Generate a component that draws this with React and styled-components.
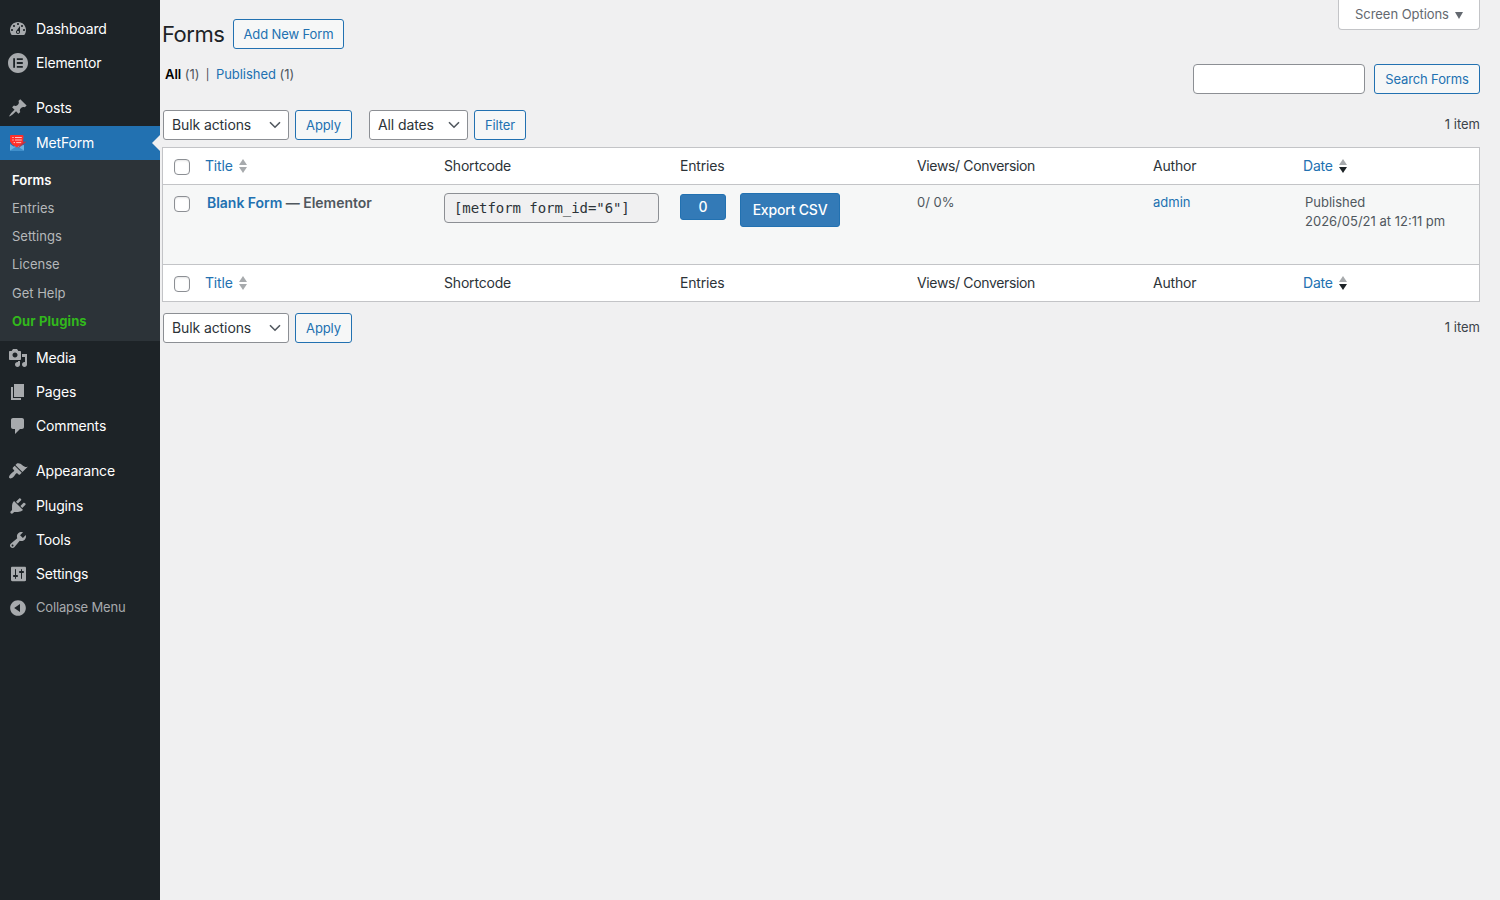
import styled, { createGlobalStyle, css } from 'styled-components';

const GlobalStyle = createGlobalStyle`
    * {
        box-sizing: border-box;
    }

    body {
        margin: 0;
        background: #f0f0f1;
        color: #3c434a;
        font-family: Inter, "Liberation Sans", sans-serif;
        font-size: 13px;
        line-height: 18px;
    }
`;

/* 20x20 menu glyphs */
const icons = {
    dashboard: 'M3.76 16h12.48c1.1-1.37 1.76-3.11 1.76-5 0-4.42-3.58-8-8-8s-8 3.58-8 8c0 1.89.66 3.63 1.76 5zM10 4c.55 0 1 .45 1 1s-.45 1-1 1-1-.45-1-1 .45-1 1-1zM6 6c.55 0 1 .45 1 1s-.45 1-1 1-1-.45-1-1 .45-1 1-1zm8 0c.55 0 1 .45 1 1s-.45 1-1 1-1-.45-1-1 .45-1 1-1zm-5.37 5.55L12 7v6c0 1.1-.9 2-2 2s-2-.9-2-2c0-.57.24-1.08.63-1.45zM4 10c.55 0 1 .45 1 1s-.45 1-1 1-1-.45-1-1 .45-1 1-1zm12 0c.55 0 1 .45 1 1s-.45 1-1 1-1-.45-1-1 .45-1 1-1zm-5 3c0-.55-.45-1-1-1s-1 .45-1 1 .45 1 1 1 1-.45 1-1z',
    elementor: 'M10 0C4.477 0 0 4.477 0 10s4.477 10 10 10 10-4.477 10-10S15.523 0 10 0zM5.2 5.2H7v9.6H5.2zM8.8 5.2h6v1.8h-6zM8.8 9.1h6v1.8h-6zM8.8 13h6v1.8h-6z',
    post: 'M10.44 3.02l1.82-1.82 6.36 6.35-1.83 1.82c-1.05-.68-2.48-.57-3.41.36l-.75.75c-.92.93-1.04 2.35-.35 3.41l-1.83 1.82-2.41-2.41-2.8 2.79c-.42.42-3.38 2.71-3.8 2.29s1.86-3.39 2.28-3.81l2.79-2.79L4.1 9.36l1.83-1.82c1.05.69 2.48.57 3.4-.36l.75-.75c.93-.92 1.05-2.35.36-3.41z',
    media: 'M13 11V4c0-.55-.45-1-1-1h-1.67L9 1H5L3.67 3H2c-.55 0-1 .45-1 1v7c0 .55.45 1 1 1h10c.55 0 1-.45 1-1zM7 4.5c1.38 0 2.5 1.12 2.5 2.5S8.38 9.5 7 9.5 4.5 8.38 4.5 7 5.62 4.5 7 4.5zM14 6h5v10.5c0 1.38-1.12 2.5-2.5 2.5S14 17.88 14 16.5s1.12-2.5 2.5-2.5c.17 0 .34.02.5.05V9h-3V6zm-4 8.05V13h2v3.5c0 1.38-1.12 2.5-2.5 2.5S7 17.88 7 16.5 8.12 14 9.5 14c.17 0 .34.02.5.05z',
    page: 'M6 15V2h10v13H6zm-1 1h8v2H3V5h2v11z',
    comments: 'M5 2h9c1.1 0 2 .9 2 2v7c0 1.1-.9 2-2 2h-2l-5 5v-5H5c-1.1 0-2-.9-2-2V4c0-1.1.9-2 2-2z',
    appearance: 'M14.48 11.06L7.41 3.99l1.5-1.5c.5-.56 2.3-.47 3.51.32 1.21.8 1.43 1.28 2.91 2.1 1.18.64 2.45 1.26 4.45.85zm-.71.71L6.7 4.7 4.93 6.47c-.39.39-.39 1.02 0 1.41l1.06 1.06c.39.39.39 1.03 0 1.42-.6.6-1.43 1.11-2.21 1.69-.35.26-.7.53-1.01.84C1.43 14.23.4 16.08 1.4 17.07c.99 1 2.84-.03 4.18-1.36.31-.31.58-.66.85-1.02.57-.78 1.08-1.61 1.69-2.21.39-.39 1.02-.39 1.41 0l1.06 1.06c.39.39 1.02.39 1.41 0z',
    plugins: 'M13.11 4.36L9.87 7.6 8 5.73l3.24-3.24c.35-.34 1.05-.2 1.56.32.52.51.66 1.21.31 1.55zm-8 1.77l.91-1.12 9.01 9.01-1.19.84c-.71.71-2.63 1.16-3.82 1.16H6.14L4.9 17.26c-.59.59-1.54.59-2.12 0-.59-.58-.59-1.53 0-2.12l1.24-1.24v-3.88c0-1.13.4-3.19 1.09-3.89zm7.26 3.97l3.24-3.24c.34-.35 1.04-.21 1.55.31.52.51.66 1.21.31 1.55l-3.24 3.25z',
    tools: 'M16.68 9.77c-1.34 1.34-3.3 1.67-4.95.99l-5.41 6.52c-.99.99-2.59.99-3.58 0s-.99-2.59 0-3.57l6.52-5.42c-.68-1.65-.35-3.61.99-4.95 1.28-1.28 3.12-1.62 4.72-1.06l-2.89 2.89 2.82 2.82 2.86-2.87c.53 1.58.18 3.39-1.08 4.65zM3.81 16.21c.4.39 1.04.39 1.43 0 .4-.4.4-1.04 0-1.43-.39-.4-1.03-.4-1.43 0-.39.39-.39 1.03 0 1.43z',
    settings: 'M18 16V4c0-.8-.5-1.3-1.3-1.3H4.3C3.5 2.7 3 3.2 3 4v12c0 .8.5 1.2 1.3 1.2h12.4c.8 0 1.3-.4 1.3-1.2zM8 11h1c.55 0 1 .45 1 1s-.45 1-1 1H8v1.5c0 .28-.22.5-.5.5s-.5-.22-.5-.5V13H6c-.55 0-1-.45-1-1s.45-1 1-1h1V5.5c0-.28.22-.5.5-.5s.5.22.5.5V11zm5-2h-1c-.55 0-1-.45-1-1s.45-1 1-1h1V5.5c0-.28.22-.5.5-.5s.5.22.5.5V7h1c.55 0 1 .45 1 1s-.45 1-1 1h-1v5.5c0 .28-.22.5-.5.5s-.5-.22-.5-.5V9z',
    collapse: 'M10 2.16c4.33 0 7.84 3.51 7.84 7.84s-3.51 7.84-7.84 7.84S2.16 14.33 2.16 10 5.71 2.16 10 2.16zm2 11.72V6.12L6.18 9.97z',
};

const submenu = [
    { label: 'Forms', current: true },
    { label: 'Entries' },
    { label: 'Settings' },
    { label: 'License' },
    { label: 'Get Help', gap: 1 },
    { label: 'Our Plugins', promo: true },
];

const MenuIcon = ({ name }) => (
    <Glyph viewBox="0 0 20 20">
        <path fillRule="evenodd" d={icons[name]} />
    </Glyph>
);

const MetFormIcon = () => (
    <Glyph viewBox="0 0 20 20">
        <path fill="#6db3e2" d="M2 11l3.5 2.5L16 12v5a1 1 0 0 1-1 1H3a1 1 0 0 1-1-1z" />
        <path fill="#3f8fcb" d="M2 17.5l7-4.5 7 4.5a1 1 0 0 1-1 .5H3z" />
        <path fill="#b8384a" d="M13.5 8.4l5 .4-8.4 6.6z" />
        <path fill="#ff2f2a" d="M3 2h11.5a1 1 0 0 1 1 1l-.5 6.6L9 14.6 4.2 11.6 2 8.4V3a1 1 0 0 1 1-1z" />
        <path stroke="#ffc4c4" strokeWidth="1" d="M4.3 4.5h1.4M7 4.5h6.8M4.3 7h1.4M7 7h6.8M5.6 9.6H7M8.2 9.6h5" />
    </Glyph>
);

const Item = ({ icon, label, ...rest }) => (
    <MenuItem {...rest}>
        {icon === 'metform' ? <MetFormIcon /> : <MenuIcon name={icon} />}
        <span>{label}</span>
    </MenuItem>
);

const Sidebar = () => (
    <SidebarWrap>
        <Item icon="dashboard" label="Dashboard" />
        <Item icon="elementor" label="Elementor" />
        <Item icon="post" label="Posts" $top={11} />
        <Item icon="metform" label="MetForm" $top={1} $active />
        <Submenu>
            {submenu.map((item) => (
                <SubItem key={item.label} $current={item.current} $promo={item.promo} $gap={item.gap}>
                    {item.label}
                </SubItem>
            ))}
        </Submenu>
        <Item icon="media" label="Media" />
        <Item icon="page" label="Pages" />
        <Item icon="comments" label="Comments" />
        <Item icon="appearance" label="Appearance" $top={11} />
        <Item icon="plugins" label="Plugins" $top={1} />
        <Item icon="tools" label="Tools" />
        <Item icon="settings" label="Settings" />
        <Item icon="collapse" label="Collapse Menu" $muted />
    </SidebarWrap>
);

const Sorter = ({ desc }) => (
    <SortArrows viewBox="0 0 8 14">
        <path fill="#a7aaad" d="M0 6l4-6 4 6z" />
        <path fill={desc ? '#1d2327' : '#a7aaad'} d="M0 8h8l-4 6z" />
    </SortArrows>
);

const SelectBox = ({ label, width }) => (
    <Select $width={width}>
        {label}
        <Chevron viewBox="0 0 12 8">
            <path d="M1 1.2l5 5 5-5" />
        </Chevron>
    </Select>
);

const HeadRow = ({ foot }) => (
    <Row $head $foot={foot}>
        <CheckCell $head><Checkbox /></CheckCell>
        <SortLink>Title<Sorter /></SortLink>
        <Cell>Shortcode</Cell>
        <Cell>Entries</Cell>
        <Cell $tight>Views/ Conversion</Cell>
        <Cell>Author</Cell>
        <SortLink>Date<Sorter desc /></SortLink>
    </Row>
);

const App = () => {
    return (
        <>
            <GlobalStyle />
            <Page>
                <Sidebar />
                <Content>
                    <TopBar>
                        <TitleWrap>
                            <Title>Forms</Title>
                            <Button $width={111}>Add New Form</Button>
                        </TitleWrap>
                        <ScreenOptions>
                            Screen Options
                            <Caret viewBox="0 0 8 7"><path d="M0 0h8L4 7z" /></Caret>
                        </ScreenOptions>
                    </TopBar>
                    <FilterBar>
                        <Views>
                            <b>All</b> <Count>(1)</Count>
                            <Divider>|</Divider>
                            <Link>Published</Link> <Count>(1)</Count>
                        </Views>
                        <SearchWrap>
                            <SearchInput />
                            <Button $width={106}>Search Forms</Button>
                        </SearchWrap>
                    </FilterBar>
                    <TableNav>
                        <SelectBox label="Bulk actions" width={126} />
                        <Button $width={57}>Apply</Button>
                        <DateFilter>
                            <SelectBox label="All dates" width={99} />
                            <Button $width={52}>Filter</Button>
                        </DateFilter>
                        <ItemCount>1 item</ItemCount>
                    </TableNav>
                    <Table>
                        <HeadRow />
                        <Row>
                            <CheckCell><Checkbox /></CheckCell>
                            <FormName><Link>Blank Form</Link> — Elementor</FormName>
                            <Shortcode>[metform form_id="6"]</Shortcode>
                            <Actions>
                                <EntryCount>0</EntryCount>
                                <ExportButton>Export CSV</ExportButton>
                            </Actions>
                            <Cell>0/ 0%</Cell>
                            <Cell><Link>admin</Link></Cell>
                            <DateCell>Published<br />2026/05/21 at 12:11 pm</DateCell>
                        </Row>
                        <HeadRow foot />
                    </Table>
                    <TableNav $bottom>
                        <SelectBox label="Bulk actions" width={126} />
                        <Button $width={57}>Apply</Button>
                        <ItemCount>1 item</ItemCount>
                    </TableNav>
                </Content>
            </Page>
        </>
    );
};

export default App;

const Page = styled.div`
    display: flex;
    height: 100vh;
    overflow: hidden;
`;

const SidebarWrap = styled.nav`
    width: 160px;
    flex-shrink: 0;
    padding-top: 12px;
    background: #1d2327;
`;

const Glyph = styled.svg`
    width: 20px;
    height: 20px;
    flex-shrink: 0;
    fill: #a7aaad;
`;

const MenuItem = styled.div`
    position: relative;
    display: flex;
    align-items: center;
    gap: 8px;
    height: 34px;
    margin-top: ${({ $top }) => $top || 0}px;
    padding-left: 8px;
    color: #fff;
    font-size: 14px;
    letter-spacing: -0.16px;

    ${({ $muted }) => $muted && css`
        color: #a7aaad;
        font-size: 13px;

        span {
            padding-bottom: 2px;
        }
    `}

    ${({ $active }) => $active && css`
        background: #2271b1;

        &::after {
            content: "";
            position: absolute;
            right: 0;
            top: 9px;
            border: 8px solid transparent;
            border-left: 0;
            border-right-color: #f0f0f1;
        }
    `}
`;

const Submenu = styled.div`
    height: 181px;
    padding-top: 6px;
    background: #2c3338;
`;

const SubItem = styled.div`
    height: 28px;
    margin-top: ${({ $gap }) => $gap || 0}px;
    padding: 5px 12px;
    color: ${({ $current, $promo }) => ($promo ? '#32b81c' : $current ? '#fff' : '#b5b8ba')};
    font-weight: ${({ $current, $promo }) => ($promo ? 700 : $current ? 600 : 400)};
    letter-spacing: ${({ $promo }) => ($promo ? '0.1px' : 'normal')};
`;

const Content = styled.main`
    flex: 1;
    padding: 0 20px 0 2px;
`;

const TopBar = styled.header`
    display: flex;
    justify-content: space-between;
    height: 64px;
`;

const TitleWrap = styled.div`
    display: flex;
    gap: 9px;
    padding-top: 19px;
`;

const Title = styled.h1`
    width: 62px;
    margin: 0;
    color: #1d2327;
    font-size: 22px;
    font-weight: 400;
    letter-spacing: -0.5px;
    line-height: 30px;
    white-space: nowrap;
`;

const ScreenOptions = styled.div`
    display: flex;
    justify-content: center;
    gap: 6px;
    width: 142px;
    height: 30px;
    padding-top: 5px;
    border: 1px solid #c3c4c7;
    border-top: 0;
    border-radius: 0 0 4px 4px;
    background: #fff;
    color: #646970;
    letter-spacing: -0.05px;
`;

const Caret = styled.svg`
    width: 8px;
    height: 7px;
    margin-top: 7px;
    fill: #646970;
`;

const Button = styled.button`
    width: ${({ $width }) => $width}px;
    height: 30px;
    padding: 1px 0 0;
    border: 1px solid #2271b1;
    border-radius: 3px;
    background: #f6f7f7;
    color: #2271b1;
    font: 400 13px/27px Inter, "Liberation Sans", sans-serif;
    letter-spacing: -0.12px;
    white-space: nowrap;
`;

const FilterBar = styled.div`
    display: flex;
    justify-content: space-between;
    height: 46px;
`;

const Views = styled.div`
    padding: 1px 0 0 3px;
    letter-spacing: -0.05px;
    white-space: nowrap;

    b {
        color: #000;
        font-weight: 600;
    }
`;

const Count = styled.span`
    color: #50575e;
`;

const Divider = styled.span`
    margin: 0 6.5px;
    font-size: 11px;
`;

const Link = styled.a`
    color: #2271b1;
`;

const SearchWrap = styled.div`
    display: flex;
    gap: 9px;
`;

const SearchInput = styled.input`
    width: 172px;
    height: 30px;
    border: 1px solid #8c8f94;
    border-radius: 4px;
    background: #fff;
`;

const TableNav = styled.div`
    display: flex;
    gap: 6px;
    height: 37px;
    padding-left: 1px;
    margin-top: ${({ $bottom }) => ($bottom ? 11 : 0)}px;
`;

const DateFilter = styled.div`
    display: flex;
    gap: 6px;
    margin-left: 11px;
`;

const Select = styled.div`
    display: flex;
    align-items: center;
    justify-content: space-between;
    width: ${({ $width }) => $width}px;
    height: 30px;
    padding: 0 7px 0 8px;
    border: 1px solid #8c8f94;
    border-radius: 3px;
    background: #fff;
    color: #2c3338;
    font-size: 14px;
    letter-spacing: -0.1px;
    white-space: nowrap;
`;

const Chevron = styled.svg`
    width: 12px;
    height: 8px;
    fill: none;
    stroke: #50575e;
    stroke-width: 1.6;
`;

const ItemCount = styled.div`
    margin-left: auto;
    padding-top: 5px;
`;

const Table = styled.section`
    border: 1px solid #c3c4c7;
    background: #fff;
`;

const Row = styled.div`
    display: grid;
    grid-template-columns: 42px 239px 236px 237px 236px 150px 1fr;
    height: ${({ $head }) => ($head ? 36 : 80)}px;
    background: ${({ $head }) => ($head ? '#fff' : '#f6f7f7')};
    ${({ $foot }) => $foot && 'border-top: 1px solid #c3c4c7; height: 37px;'}

    ${({ $head }) => $head ? css`
        align-items: center;
        color: #2c3338;
        font-size: 14px;
        letter-spacing: -0.18px;
    ` : css`
        align-items: start;
        padding-top: 8px;
        border-top: 1px solid #c3c4c7;
        color: #50575e;
        line-height: 19px;
    `}
`;

const Cell = styled.div`
    ${({ $tight }) => $tight && 'letter-spacing: -0.35px;'}
    white-space: nowrap;
`;

const CheckCell = styled.div`
    display: flex;
    padding: ${({ $head }) => ($head ? 1 : 3)}px 0 0 11px;
`;

const Checkbox = styled.input.attrs({ type: 'checkbox' })`
    appearance: none;
    width: 16px;
    height: 16px;
    margin: 0;
    border: 1px solid #8c8f94;
    border-radius: 4px;
    background: #fff;
    box-shadow: inset 0 1px 2px rgba(0, 0, 0, 0.1);
`;

const SortLink = styled.div`
    display: flex;
    align-items: center;
    gap: 6px;
    color: #2271b1;
`;

const SortArrows = styled.svg`
    width: 8px;
    height: 14px;
`;

const FormName = styled.strong`
    padding-left: 2px;
    font-size: 14px;
    font-weight: 600;
    letter-spacing: -0.03px;
    white-space: nowrap;
`;

const Shortcode = styled.code`
    width: 215px;
    height: 30px;
    padding: 0 9px;
    border: 1px solid #8c8f94;
    border-radius: 4px;
    background: #f0f0f1;
    color: #2c3338;
    font: 14px/28px "DejaVu Sans Mono", monospace;
    letter-spacing: -0.06px;
    white-space: nowrap;
`;

const Actions = styled.div`
    display: flex;
    align-items: flex-start;
    gap: 14px;
`;

const EntryCount = styled.span`
    width: 46px;
    height: 26px;
    margin-top: 1px;
    border: 1px solid #2271b1;
    border-radius: 3px;
    background: #337ab7;
    color: #fff;
    font-size: 14px;
    font-weight: 500;
    line-height: 24px;
    text-align: center;
`;

const ExportButton = styled.span`
    width: 100px;
    height: 34px;
    border: 1px solid #2271b1;
    border-radius: 3px;
    background: #337ab7;
    color: #fff;
    font-size: 14px;
    font-weight: 500;
    letter-spacing: -0.2px;
    line-height: 32px;
    text-align: center;
    white-space: nowrap;
`;

const DateCell = styled.div`
    padding-left: 2px;
    white-space: nowrap;
`;
